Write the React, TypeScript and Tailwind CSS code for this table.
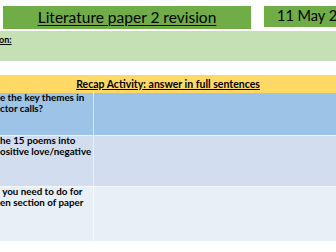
import type React from 'react';

const rows = [
  { lines: ['e the key themes in', 'ctor calls?'], bg: 'bg-[#9dc3e6]', h: 'h-[42px]' },
  { lines: ['he 15 poems into', 'ositive love/negative'], bg: 'bg-[#d2deef]', h: 'h-[51px]' },
  { lines: [' you need to do for', 'en section of paper'], bg: 'bg-[#e9eff7]', h: 'h-[55px]' },
];

function App(): React.ReactElement {
  return (
    <div className="w-[336px] h-[252px] overflow-hidden bg-white font-['Lato','Liberation_Sans',sans-serif] text-black">
      {/* Header */}
      <div className="flex items-start pt-[6px]">
        <div className="ml-[3px] w-[248px] h-[23px] bg-[#70ad47] flex items-center justify-center">
          <span className="text-[15.5px] leading-none underline underline-offset-2 decoration-1">
            Literature paper 2 revision
          </span>
        </div>
        <div className="ml-[13px] flex-1 h-[21px] bg-[#70ad47] flex items-center pl-[13px] whitespace-nowrap overflow-hidden">
          <span className="text-[14.5px] leading-none">11 May 2023</span>
        </div>
      </div>

      {/* Objective band */}
      <div className="mt-[2px] h-[30px] bg-[#c5e0b4] pt-[4px]">
        <span className="block text-[9px] font-bold leading-none underline -ml-[1px]">on:</span>
      </div>

      {/* Recap header */}
      <div className="mt-[14px] h-[18px] bg-[#ffd966] flex items-center justify-center">
        <span className="text-[10.5px] font-bold underline leading-none">
          Recap Activity: answer in full sentences
        </span>
      </div>

      {/* Table */}
      <div className="flex flex-col">
        {rows.map((row, i) => (
          <div key={i} className={`flex ${row.h} ${row.bg} ${i > 0 ? 'border-t border-white/60' : ''}`}>
            <div className="w-[94px] border-r border-white/60 text-[9.8px] font-bold leading-[11px] whitespace-pre -mt-[1px]">
              {row.lines.map((line) => (
                <div key={line}>{line}</div>
              ))}
            </div>
            <div className="flex-1" />
          </div>
        ))}
      </div>
    </div>
  );
}

export default App;
